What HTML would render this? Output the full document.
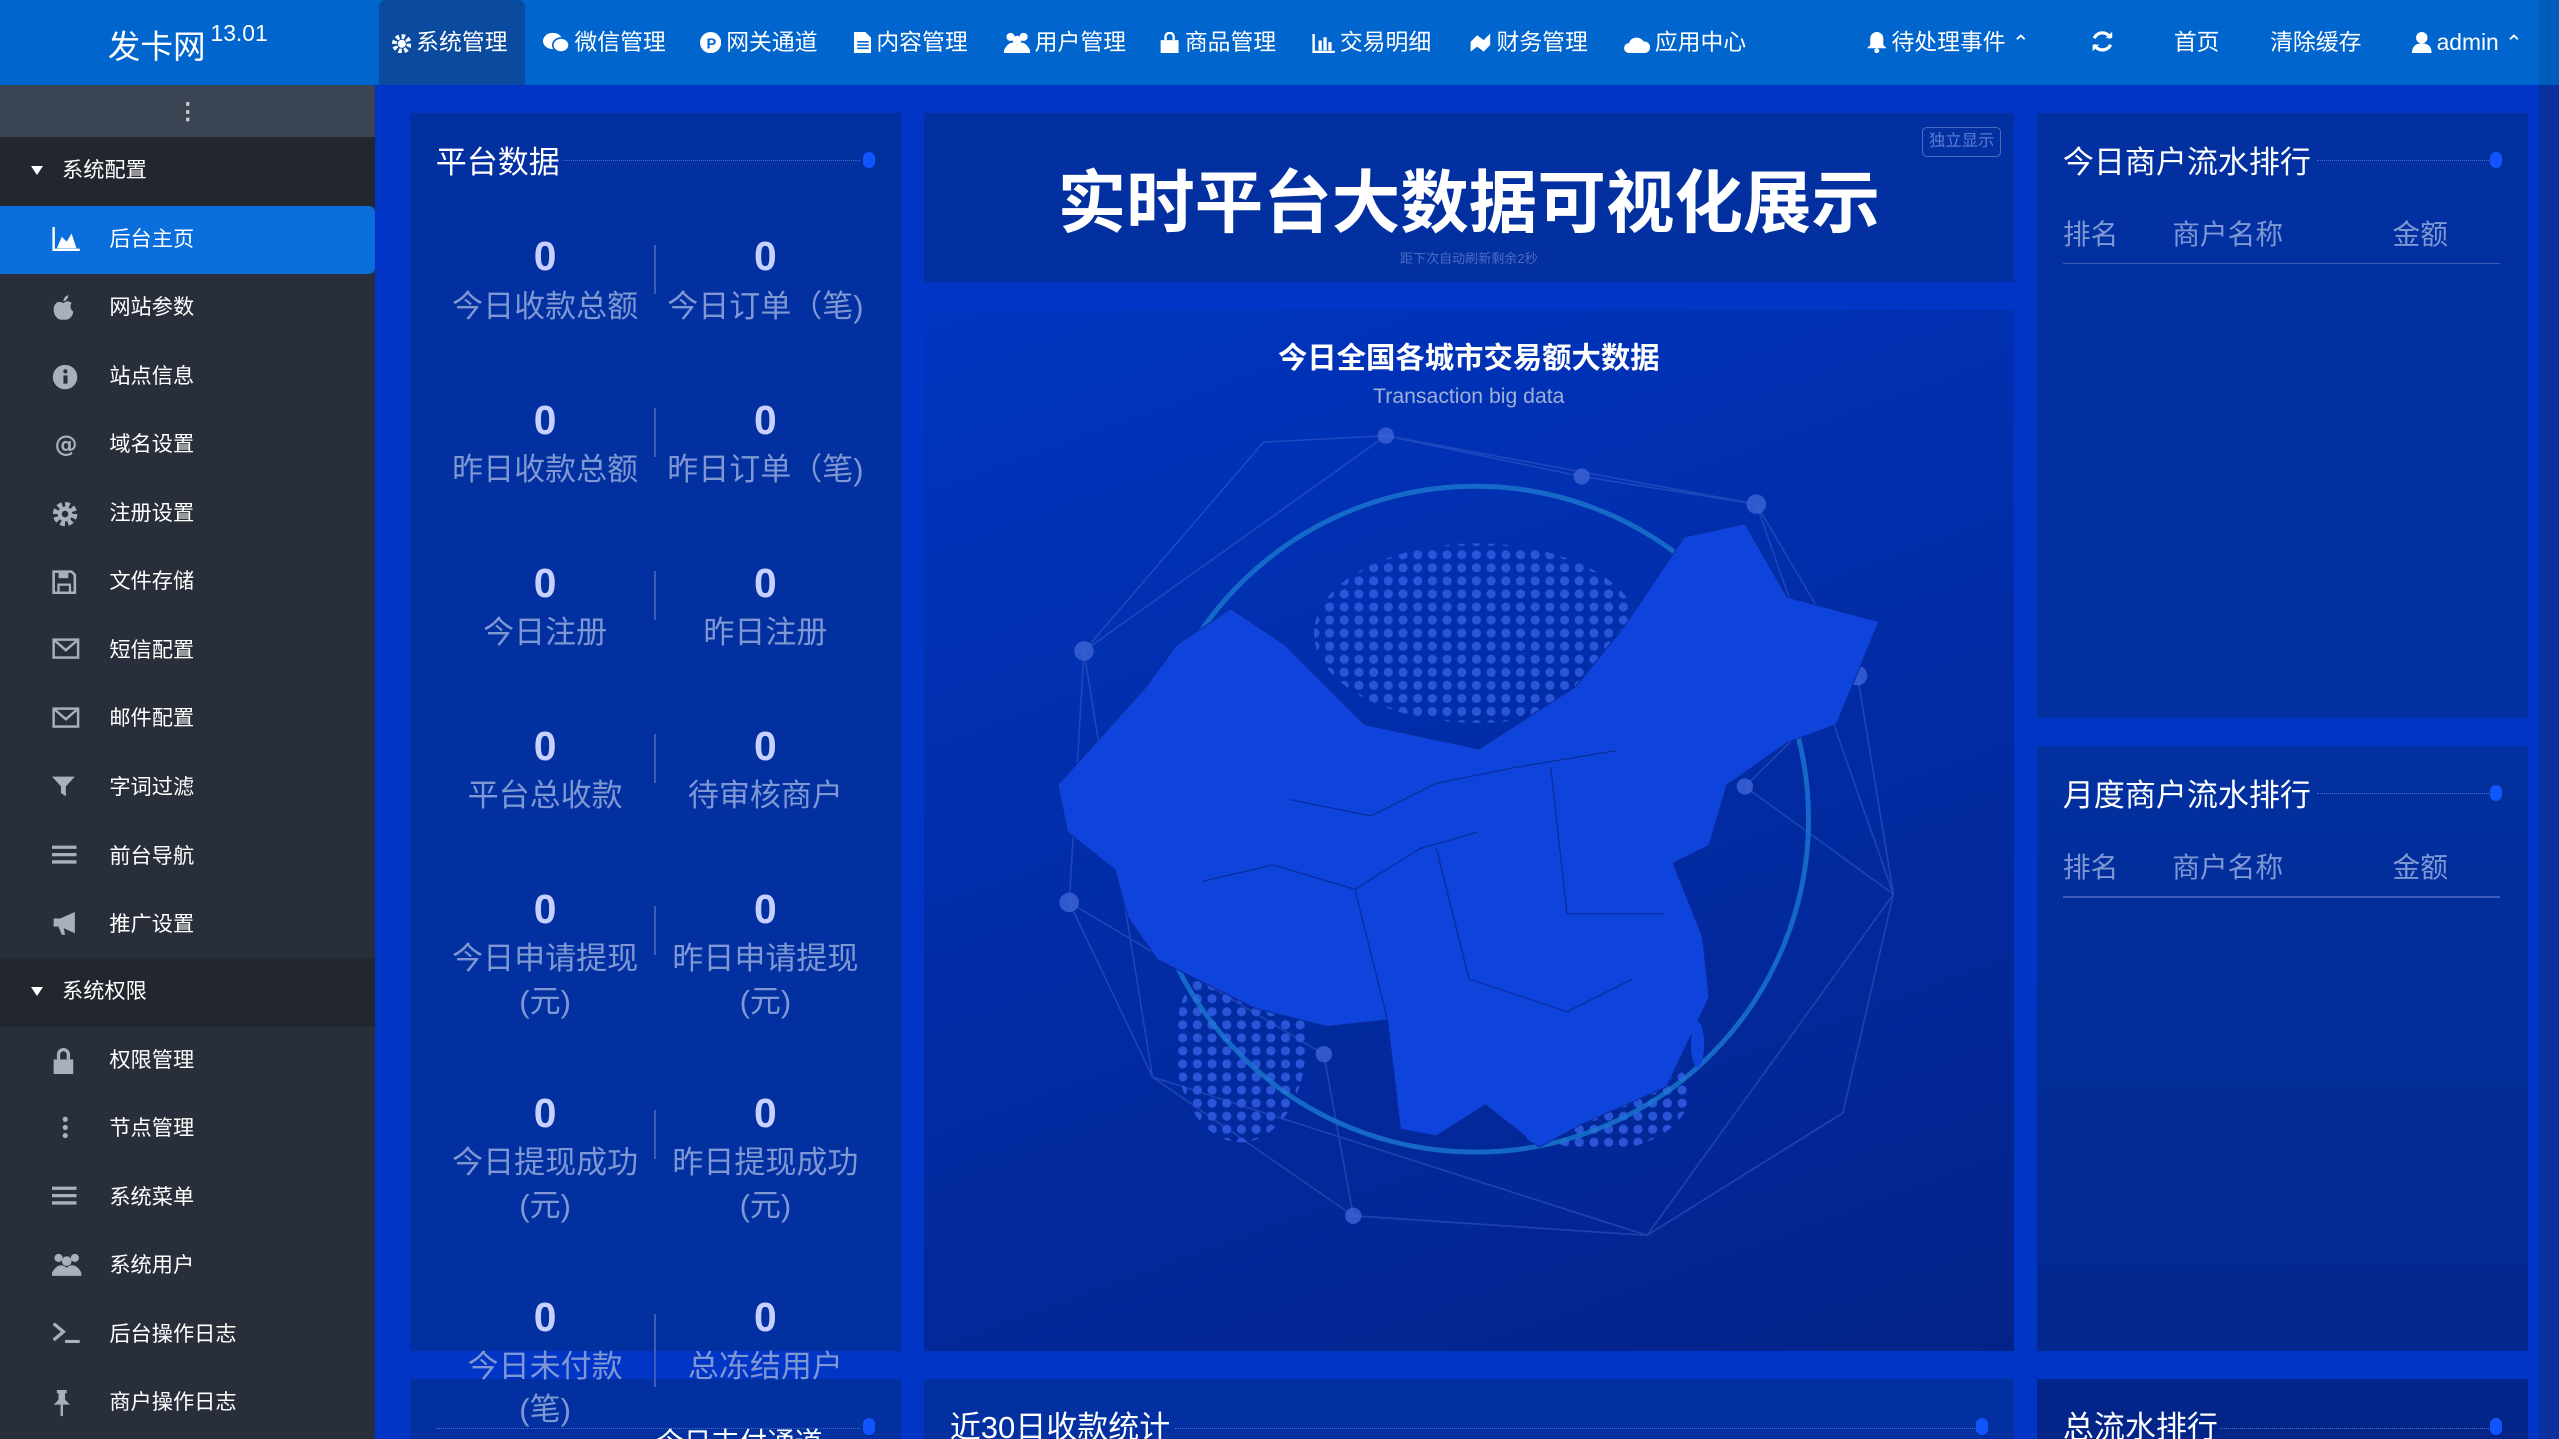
<!DOCTYPE html>
<html><head><meta charset="utf-8"><style>
*{margin:0;padding:0;box-sizing:border-box}
html,body{width:2559px;height:1439px;overflow:hidden;background:#0033c4}
#w{position:absolute;left:0;top:0;width:1568px;height:882px;zoom:1.632;font-family:"Liberation Sans","Noto Sans CJK SC",sans-serif;overflow:hidden;background:#0035c6}
.a{position:absolute}
.hdr{left:0;top:0;width:1568px;height:52px;background:#0065cd;color:#fff;font-size:14px}
.nav{top:0;height:52px;line-height:52px;white-space:nowrap}
.nav svg{vertical-align:-2px;margin-right:3px}
.sb{left:0;top:52px;width:230px;height:830px;background:#292f3a}
.sec{left:0;width:230px;height:42px;background:#22262e;color:#fff;font-size:13px;line-height:42px;padding-left:38px}
.sec:before{content:"";position:absolute;left:19px;top:18px;border-left:4px solid transparent;border-right:4px solid transparent;border-top:6px solid #fff}
.it{left:0;width:230px;height:42px;color:#fff;font-size:13px;line-height:42px;padding-left:67px}
.ic{position:absolute;left:32px;top:13px;width:17px;height:16px;color:#a9b0bb;font-size:14px;line-height:16px;text-align:center;font-weight:bold;font-family:"DejaVu Sans",sans-serif}
.ic svg{display:block}
.pn{background:#0230a0}
.tt{color:#fff;font-size:19px}
.dl{border-top:1px dotted #4a6bc4;height:0}
.dot{width:7px;height:10px;border-radius:4px;background:#1155ff}
.n{width:150px;text-align:center;color:#c8d0ff;font-size:25px;font-weight:bold}
.l{width:150px;text-align:center;color:#7f98d4;font-size:19px;line-height:26px}
.vd{width:1px;height:30px;background:#3d5cb8}
.th{color:#7f98d4;font-size:17px}
</style></head><body><div id="w">
<div class="a hdr">
 <div class="a" style="left:66px;top:13px;font-size:20px">发卡网</div>
 <div class="a" style="left:129px;top:12px;font-size:14px">13.01</div>
 <div class="a" style="left:232px;top:0;width:90px;height:52px;background:#0a4a9f;border-radius:4px 4px 0 0"></div>
 <div class="a nav" style="left:240px"><svg width="12" height="12" viewBox="0 0 12 12"><circle cx="6" cy="6" r="4.5" fill="none" stroke="#fff" stroke-width="3" stroke-dasharray="2 1.5"/><circle cx="6" cy="6" r="2.5" fill="#fff"/></svg>系统管理</div>
 <div class="a nav" style="left:333px"><svg width="16" height="13" viewBox="0 0 16 13"><ellipse cx="6" cy="5.5" rx="6" ry="5" fill="#fff"/><ellipse cx="11" cy="8" rx="5" ry="4.3" fill="#fff" stroke="#0065cd"/></svg>微信管理</div>
 <div class="a nav" style="left:429px"><svg width="13" height="13" viewBox="0 0 13 13"><circle cx="6.5" cy="6.5" r="6.5" fill="#fff"/><text x="4" y="10" font-size="9" font-weight="bold" fill="#0065cd" font-family="Liberation Sans">P</text></svg>网关通道</div>
 <div class="a nav" style="left:523px"><svg width="11" height="13" viewBox="0 0 11 13"><path d="M0 0H7L11 4V13H0Z" fill="#fff"/><path d="M2 6H9M2 8H9M2 10H9" stroke="#0065cd"/></svg>内容管理</div>
 <div class="a nav" style="left:615px"><svg width="16" height="13" viewBox="0 0 16 13"><circle cx="4" cy="3" r="2.5" fill="#fff"/><circle cx="12" cy="3" r="2.5" fill="#fff"/><circle cx="8" cy="5" r="2.7" fill="#fff"/><path d="M0 11Q4 4 8 8Q12 4 16 11V13H0Z" fill="#fff"/></svg>用户管理</div>
 <div class="a nav" style="left:710px"><svg width="13" height="13" viewBox="0 0 13 13"><path d="M1 5H12V13H1Z" fill="#fff"/><path d="M4 5V3A2.5 2.5 0 0 1 9 3V5" stroke="#fff" fill="none" stroke-width="1.5"/></svg>商品管理</div>
 <div class="a nav" style="left:804px"><svg width="14" height="12" viewBox="0 0 14 12"><path d="M1 0V11H14" stroke="#fff" fill="none" stroke-width="1.5"/><path d="M4 4h2v6H4zM7 2h2v8H7zM10 5h2v5h-2z" fill="#fff"/></svg>交易明细</div>
 <div class="a nav" style="left:900px"><svg width="14" height="13" viewBox="0 0 14 13"><path d="M1 6L5 2L9 5L13 1V8L9 12L5 9L1 12Z" fill="#fff"/></svg>财务管理</div>
 <div class="a nav" style="left:995px"><svg width="16" height="11" viewBox="0 0 16 11"><path d="M3 11A3 3 0 0 1 3 5A5 5 0 0 1 12 4A3.5 3.5 0 0 1 13 11Z" fill="#fff"/></svg>应用中心</div>
 <div class="a nav" style="left:1144px"><svg width="12" height="13" viewBox="0 0 12 13"><path d="M6 0A4 4 0 0 1 10 4V8L12 10H0L2 8V4A4 4 0 0 1 6 0Z" fill="#fff"/><circle cx="6" cy="11.5" r="1.5" fill="#fff"/></svg>待处理事件 <span style="font-size:13px">&#8963;</span></div>
 <div class="a nav" style="left:1281px"><svg width="14" height="14" viewBox="0 0 14 14"><path d="M12 5A5.5 5.5 0 0 0 2 5M2 9A5.5 5.5 0 0 0 12 9" stroke="#fff" stroke-width="2" fill="none"/><path d="M9 5H13V1ZM5 9H1V13Z" fill="#fff"/></svg></div>
 <div class="a nav" style="left:1332px">首页</div>
 <div class="a nav" style="left:1391px">清除缓存</div>
 <div class="a nav" style="left:1478px"><svg width="12" height="13" viewBox="0 0 12 13"><circle cx="6" cy="3.5" r="3.5" fill="#fff"/><path d="M0 13Q0 7 6 7Q12 7 12 13Z" fill="#fff"/></svg>admin <span style="font-size:13px">&#8963;</span></div>
</div>
<div class="a sb">
 <div class="a" style="left:0;top:0;width:230px;height:32px;background:#3a4453;color:#ccc;text-align:center;line-height:32px;font-size:14px;font-weight:bold">⋮</div>
</div>
<div class="a sec" style="top:84px">系统配置</div>
<div class="a it" style="top:126px;background:#0a6fdc;border-radius:0 4px 4px 0"><span class="ic"><svg width="17" height="15" viewBox="0 0 17 15"><path d="M1 0V14H17" stroke="#fff" stroke-width="1.5" fill="none"/><path d="M3 13L6 6L9 9L12 4L15 13Z" fill="#fff"/></svg></span>后台主页</div>
<div class="a it" style="top:168px"><span class="ic"><svg width="14" height="16" viewBox="0 0 14 16"><path d="M7 5C4 3 1 5 1 9C1 13 4 16 7 15C10 16 13 13 13 10C11 9 11 6 12 5C10 3 8 4 7 5Z" fill="#a9b0bb"/><path d="M7 4Q7 1 10 0Q10 3 7 4Z" fill="#a9b0bb"/></svg></span>网站参数</div>
<div class="a it" style="top:210px"><span class="ic"><svg width="16" height="16" viewBox="0 0 16 16"><circle cx="8" cy="8" r="7.5" fill="#a9b0bb"/><rect x="7" y="7" width="2.5" height="5" fill="#292f3a"/><circle cx="8.2" cy="4.5" r="1.3" fill="#292f3a"/></svg></span>站点信息</div>
<div class="a it" style="top:252px"><span class="ic">@</span>域名设置</div>
<div class="a it" style="top:294px"><span class="ic"><svg width="16" height="16" viewBox="0 0 16 16"><circle cx="8" cy="8" r="5.5" fill="none" stroke="#a9b0bb" stroke-width="4" stroke-dasharray="2.6 1.7"/><circle cx="8" cy="8" r="4.5" fill="#a9b0bb"/><circle cx="8" cy="8" r="2" fill="#292f3a"/></svg></span>注册设置</div>
<div class="a it" style="top:336px"><span class="ic"><svg width="15" height="15" viewBox="0 0 15 15"><path d="M1 1H12L14 3V14H1Z" fill="none" stroke="#a9b0bb" stroke-width="1.6"/><rect x="4" y="1" width="6" height="4" fill="#a9b0bb"/><rect x="4" y="9" width="7" height="5" fill="none" stroke="#a9b0bb" stroke-width="1.4"/></svg></span>文件存储</div>
<div class="a it" style="top:378px"><span class="ic"><svg width="17" height="13" viewBox="0 0 17 13"><rect x="1" y="1" width="15" height="11" fill="none" stroke="#a9b0bb" stroke-width="1.5"/><path d="M1 1L8.5 7.5L16 1" stroke="#a9b0bb" fill="none" stroke-width="1.5"/></svg></span>短信配置</div>
<div class="a it" style="top:420px"><span class="ic"><svg width="17" height="13" viewBox="0 0 17 13"><rect x="1" y="1" width="15" height="11" fill="none" stroke="#a9b0bb" stroke-width="1.5"/><path d="M1 1L8.5 7.5L16 1" stroke="#a9b0bb" fill="none" stroke-width="1.5"/></svg></span>邮件配置</div>
<div class="a it" style="top:462px"><span class="ic"><svg width="14" height="14" viewBox="0 0 14 14"><path d="M0 1H14L8.5 7V13L5.5 11V7Z" fill="#a9b0bb"/></svg></span>字词过滤</div>
<div class="a it" style="top:504px"><span class="ic"><svg width="15" height="13" viewBox="0 0 15 13"><path d="M0 2H15M0 6.5H15M0 11H15" stroke="#a9b0bb" stroke-width="2"/></svg></span>前台导航</div>
<div class="a it" style="top:546px"><span class="ic"><svg width="17" height="14" viewBox="0 0 17 14"><path d="M1 4H5L14 0V13L5 9H1Z" fill="#a9b0bb"/><path d="M4 9L6 14H8L7 9Z" fill="#a9b0bb"/></svg></span>推广设置</div>
<div class="a sec" style="top:587px">系统权限</div>
<div class="a it" style="top:629px"><span class="ic"><svg width="14" height="16" viewBox="0 0 14 16"><path d="M4 7V4A3 3 0 0 1 10 4V7" fill="none" stroke="#a9b0bb" stroke-width="2"/><rect x="1" y="7" width="12" height="9" fill="#a9b0bb"/></svg></span>权限管理</div>
<div class="a it" style="top:671px"><span class="ic"><svg width="4" height="14" viewBox="0 0 4 14" style="margin-left:6px"><circle cx="2" cy="2" r="1.6" fill="#a9b0bb"/><circle cx="2" cy="7" r="1.6" fill="#a9b0bb"/><circle cx="2" cy="12" r="1.6" fill="#a9b0bb"/></svg></span>节点管理</div>
<div class="a it" style="top:713px"><span class="ic"><svg width="15" height="13" viewBox="0 0 15 13"><path d="M0 2H15M0 6.5H15M0 11H15" stroke="#a9b0bb" stroke-width="2"/></svg></span>系统菜单</div>
<div class="a it" style="top:755px"><span class="ic"><svg width="18" height="14" viewBox="0 0 18 14"><circle cx="4" cy="3" r="2.5" fill="#a9b0bb"/><circle cx="14" cy="3" r="2.5" fill="#a9b0bb"/><circle cx="9" cy="5" r="3" fill="#a9b0bb"/><path d="M0 12Q4 5 9 9Q14 5 18 12V14H0Z" fill="#a9b0bb"/></svg></span>系统用户</div>
<div class="a it" style="top:797px"><span class="ic"><svg width="17" height="13" viewBox="0 0 17 13"><path d="M1 1L7 6L1 11" fill="none" stroke="#a9b0bb" stroke-width="2"/><path d="M8 12H17" stroke="#a9b0bb" stroke-width="2"/></svg></span>后台操作日志</div>
<div class="a it" style="top:839px"><span class="ic"><svg width="12" height="16" viewBox="0 0 12 16"><path d="M3 0H9V2H8V6L11 9H1L4 6V2H3Z" fill="#a9b0bb"/><path d="M6 9V16" stroke="#a9b0bb" stroke-width="1.5"/></svg></span>商户操作日志</div>

<!-- left panel -->
<div class="a pn" style="left:251px;top:69px;width:301px;height:759px"></div>
<div class="a pn" style="left:251px;top:845px;width:301px;height:40px"></div>
<div class="a tt" style="left:267px;top:84px">平台数据</div>
<div class="a dl" style="left:345px;top:98px;width:182px"></div>
<div class="a dot" style="left:529px;top:93px"></div>
<div class="a vd" style="left:401px;top:150px"></div><div class="a n" style="left:259px;top:143px">0</div><div class="a n" style="left:394px;top:143px">0</div><div class="a l" style="left:259px;top:175px">今日收款总额</div><div class="a l" style="left:394px;top:175px">今日订单（笔)</div>
<div class="a vd" style="left:401px;top:250px"></div><div class="a n" style="left:259px;top:243px">0</div><div class="a n" style="left:394px;top:243px">0</div><div class="a l" style="left:259px;top:275px">昨日收款总额</div><div class="a l" style="left:394px;top:275px">昨日订单（笔)</div>
<div class="a vd" style="left:401px;top:350px"></div><div class="a n" style="left:259px;top:343px">0</div><div class="a n" style="left:394px;top:343px">0</div><div class="a l" style="left:259px;top:375px">今日注册</div><div class="a l" style="left:394px;top:375px">昨日注册</div>
<div class="a vd" style="left:401px;top:450px"></div><div class="a n" style="left:259px;top:443px">0</div><div class="a n" style="left:394px;top:443px">0</div><div class="a l" style="left:259px;top:475px">平台总收款</div><div class="a l" style="left:394px;top:475px">待审核商户</div>
<div class="a vd" style="left:401px;top:555px"></div><div class="a n" style="left:259px;top:543px">0</div><div class="a n" style="left:394px;top:543px">0</div><div class="a l" style="left:259px;top:575px">今日申请提现<br>(元)</div><div class="a l" style="left:394px;top:575px">昨日申请提现<br>(元)</div>
<div class="a vd" style="left:401px;top:680px"></div><div class="a n" style="left:259px;top:668px">0</div><div class="a n" style="left:394px;top:668px">0</div><div class="a l" style="left:259px;top:700px">今日提现成功<br>(元)</div><div class="a l" style="left:394px;top:700px">昨日提现成功<br>(元)</div>
<div class="a vd" style="left:401px;top:805px;height:45px"></div><div class="a n" style="left:259px;top:793px">0</div><div class="a n" style="left:394px;top:793px">0</div><div class="a l" style="left:259px;top:825px">今日未付款<br>(笔)</div><div class="a l" style="left:394px;top:825px">总冻结用户</div>
<div class="a dl" style="left:267px;top:875px;width:260px"></div><div class="a dot" style="left:529px;top:869px"></div>
<div class="a tt" style="left:402px;top:870px;font-size:17px">今日支付通道</div>

<!-- center -->
<div class="a pn" style="left:566px;top:69px;width:668px;height:104px"></div>
<div class="a" style="left:566px;top:90px;width:668px;text-align:center;color:#fff;font-size:42px;font-weight:bold">实时平台大数据可视化展示</div>
<div class="a" style="left:566px;top:152px;width:668px;text-align:center;color:#4a6bc4;font-size:8px">距下次自动刷新剩余2秒</div>
<div class="a" style="left:1178px;top:78px;width:48px;height:18px;border:1px solid #4a6bc4;border-radius:3px;color:#5a7bd0;font-size:10px;line-height:16px;text-align:center">独立显示</div>

<div class="a" style="left:566px;top:190px;width:668px;height:638px;background:linear-gradient(160deg,#0035c0,#02289a 70%,#04238a)"></div>
<div class="a" style="left:566px;top:205px;width:668px;text-align:center;color:#fff;font-size:18px;font-weight:bold">今日全国各城市交易额大数据</div>
<div class="a" style="left:566px;top:236px;width:668px;text-align:center;color:#9fb0d8;font-size:13px">Transaction big data</div>
<svg class="a" style="left:566px;top:190px" width="668" height="638" viewBox="566 190 668 638">
 <defs><pattern id="p" width="9" height="8" patternUnits="userSpaceOnUse"><circle cx="4.5" cy="4" r="2.8" fill="#2a55d8"/></pattern></defs>
 <g stroke="#3a5fc8" stroke-width="1" opacity="0.5" fill="none">
  <polyline points="664,399 774,271 849,267 969,292 1076,309 1138,414 1160,548 1129,682 1009,757 829,745 706,660 655,553 664,399"/>
  <polyline points="664,399 849,267 1076,309 1160,548 1009,757 706,660 664,399"/>
  <polyline points="655,553 811,646 829,745"/><polyline points="1069,482 1138,414"/><polyline points="1069,482 1160,548"/>
 </g>
 <g fill="#3d64d6" opacity="0.8"><circle cx="849" cy="267" r="5"/><circle cx="969" cy="292" r="5"/><circle cx="1076" cy="309" r="6"/><circle cx="664" cy="399" r="6"/><circle cx="655" cy="553" r="6"/><circle cx="1138" cy="414" r="6"/><circle cx="1069" cy="482" r="5"/><circle cx="811" cy="646" r="5"/><circle cx="829" cy="745" r="5"/></g>
 <ellipse cx="905" cy="388" rx="100" ry="55" fill="url(#p)"/>
 <ellipse cx="760" cy="640" rx="40" ry="60" fill="url(#p)"/>
 <ellipse cx="980" cy="670" rx="55" ry="35" fill="url(#p)"/>
 <circle cx="904" cy="502" r="204" fill="none" stroke="#1a78d0" stroke-width="3" opacity="0.8"/>
 <polygon fill="#0f44dc" stroke="#0a2a9a" stroke-width="0.6" points="648,481 702,421 721,395 754,373 787,395 836,444 906,459 965,421 995,384 1032,329 1069,321 1095,366 1151,381 1125,444 1095,455 1058,481 1047,518 1025,529 1043,574 1047,611 1021,666 969,689 943,703 910,677 880,696 858,692 850,625 813,629 769,618 709,588 691,562 683,533 654,510"/>
 <g stroke="#0a2a9a" stroke-width="0.7" fill="none"><polyline points="737,540 780,530 830,545 870,520 905,510"/><polyline points="790,490 840,500 880,480 930,470 990,460"/><polyline points="830,545 850,625"/><polyline points="880,520 900,600 960,620 1000,600"/><polyline points="950,470 960,560 1020,560"/></g>
 <ellipse cx="943" cy="696" rx="8" ry="5" fill="#0f44dc"/>
 <ellipse cx="1040" cy="640" rx="4" ry="14" fill="#0f44dc"/>
</svg>

<!-- right -->
<div class="a pn" style="left:1248px;top:69px;width:301px;height:371px"></div>
<div class="a tt" style="left:1264px;top:84px">今日商户流水排行</div>
<div class="a dl" style="left:1420px;top:98px;width:105px"></div><div class="a dot" style="left:1526px;top:93px"></div>
<div class="a th" style="left:1264px;top:130px">排名</div><div class="a th" style="left:1331px;top:130px">商户名称</div><div class="a th" style="left:1466px;top:130px">金额</div>
<div class="a" style="left:1264px;top:161px;width:268px;height:1px;background:#3d5cb8"></div>

<div class="a pn" style="left:1248px;top:457px;width:301px;height:371px;background:linear-gradient(180deg,#0230a0,#03288f)"></div>
<div class="a tt" style="left:1264px;top:472px">月度商户流水排行</div>
<div class="a dl" style="left:1420px;top:486px;width:105px"></div><div class="a dot" style="left:1526px;top:481px"></div>
<div class="a th" style="left:1264px;top:518px">排名</div><div class="a th" style="left:1331px;top:518px">商户名称</div><div class="a th" style="left:1466px;top:518px">金额</div>
<div class="a" style="left:1264px;top:549px;width:268px;height:1px;background:#3d5cb8"></div>

<!-- bottom -->
<div class="a pn" style="left:566px;top:845px;width:668px;height:40px"></div>
<div class="a tt" style="left:582px;top:859px">近30日收款统计</div>
<div class="a dl" style="left:720px;top:875px;width:490px"></div><div class="a dot" style="left:1211px;top:869px"></div>
<div class="a pn" style="left:1248px;top:845px;width:301px;height:40px;background:#03258a"></div>
<div class="a tt" style="left:1264px;top:859px">总流水排行</div>
<div class="a dl" style="left:1360px;top:875px;width:165px"></div><div class="a dot" style="left:1526px;top:869px"></div>
<div class="a" style="left:1556px;top:0;width:12px;height:882px;background:#0a2f9e"></div>
<div class="a" style="left:1556px;top:0;width:12px;height:52px;background:#005cbc"></div>
</div></body></html>
